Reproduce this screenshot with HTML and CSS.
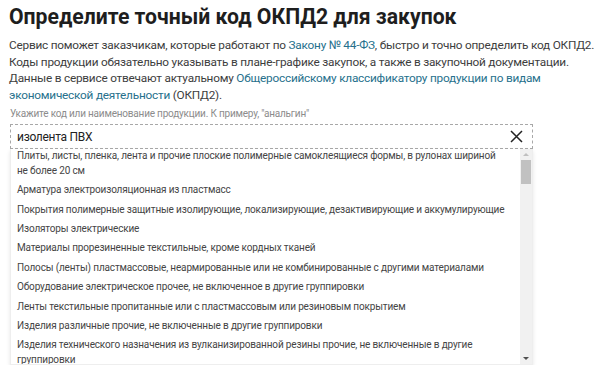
FILE: index.html
```html
<!DOCTYPE html>
<html>
<head>
    <meta name="viewport" content="width=device-width, initial-scale=1.0">
    <title>Определите точный код ОКПД2</title>
    <link rel="stylesheet" href="styles.css">
</head>
<body>
    <div class="page">
        <h1>Определите точный код ОКПД2 для закупок</h1>
        <p class="intro">
            Сервис поможет заказчикам, которые работают по <a href="#">Закону № 44-ФЗ</a>, быстро и точно определить код ОКПД2.<br>
            Коды продукции обязательно указывать в плане-графике закупок, а также в закупочной документации.<br>
            Данные в сервисе отвечают актуальному <a href="#">Общероссийскому классификатору продукции по видам<br>
            экономической деятельности</a> (ОКПД2).
        </p>

        <div class="search">
            <label class="hint" for="query">Укажите код или наименование продукции. К примеру, "анальгин"</label>
            <div class="field">
                <input type="text" id="query" value="изолента ПВХ">
                <span class="clear">
                    <svg width="13" height="13" viewBox="0 0 13 13"><path d="M1 1L12 12M12 1L1 12" stroke="#222" stroke-width="1.5"/></svg>
                </span>
            </div>
            <div class="dropdown">
                <ul class="results">
                    <li>Плиты, листы, пленка, лента и прочие плоские полимерные самоклеящиеся формы, в рулонах шириной не более 20 см</li>
                    <li>Арматура электроизоляционная из пластмасс</li>
                    <li>Покрытия полимерные защитные изолирующие, локализирующие, дезактивирующие и аккумулирующие</li>
                    <li>Изоляторы электрические</li>
                    <li>Материалы прорезиненные текстильные, кроме кордных тканей</li>
                    <li>Полосы (ленты) пластмассовые, неармированные или не комбинированные с другими материалами</li>
                    <li>Оборудование электрическое прочее, не включенное в другие группировки</li>
                    <li>Ленты текстильные пропитанные или с пластмассовым или резиновым покрытием</li>
                    <li>Изделия различные прочие, не включенные в другие группировки</li>
                    <li>Изделия технического назначения из вулканизированной резины прочие, не включенные в другие группировки</li>
                </ul>
                <div class="scrollbar">
                    <span class="arrow up"></span>
                    <span class="track"><span class="thumb"></span></span>
                    <span class="arrow down"></span>
                </div>
            </div>
        </div>
    </div>
</body>
</html>
```

FILE: styles.css
```css
body {
    margin: 0;
    background: #fff;
    font-family: Roboto, Arial, sans-serif;
    color: #333;
}
.page {
    padding: 3px 9px 0 9px;
}
h1 {
    margin: 0 0 6px 0;
    font-size: 21.2px;
    line-height: 28px;
    font-weight: 700;
    color: #1e1e1e;
}
.intro {
    margin: 0 0 4px 0;
    font-size: 11.8px;
    letter-spacing: -0.22px;
    line-height: 16.6px;
    color: #3d3d3d;
    white-space: nowrap;
}
.intro a {
    color: #26708c;
    text-decoration: none;
}
.search {
    width: 523px;
    margin-left: 1px;
}
.hint {
    display: block;
    font-size: 10px;
    letter-spacing: -0.2px;
    line-height: 14px;
    color: #8c8c8c;
    margin-bottom: 3px;
}
.field {
    display: flex;
    align-items: center;
    height: 23px;
    border: 1px dashed #a8a8a8;
    padding: 0 9px 0 6px;
}
.field input {
    flex: 1;
    border: none;
    outline: none;
    font-family: inherit;
    font-size: 12px;
    letter-spacing: -0.3px;
    color: #222;
    padding: 0;
}
.clear {
    display: flex;
}
.dropdown {
    display: flex;
    height: 215px;
    background: #fff;
    box-shadow: 0 2px 4px rgba(0, 0, 0, 0.1);
    border: 1px solid #eee;
    border-top: none;
}
.results {
    flex: 1;
    list-style: none;
    margin: 0;
    padding: 0;
    overflow: hidden;
}
.results li {
    padding: 0 13px 5px 6px;
    font-size: 10px;
    letter-spacing: -0.15px;
    line-height: 14.4px;
    color: #454545;
}
.scrollbar {
    width: 12px;
    display: flex;
    flex-direction: column;
    background: #f1f1f1;
}
.arrow {
    height: 11px;
    display: flex;
    justify-content: center;
    align-items: center;
}
.arrow::before {
    content: "";
    border-left: 3px solid transparent;
    border-right: 3px solid transparent;
}
.arrow.up::before {
    border-bottom: 3px solid #c0c0c0;
}
.arrow.down::before {
    border-top: 3px solid #505050;
}
.track {
    flex: 1;
}
.thumb {
    display: block;
    margin: 0 1px;
    height: 24px;
    background: #c1c1c1;
}
```
